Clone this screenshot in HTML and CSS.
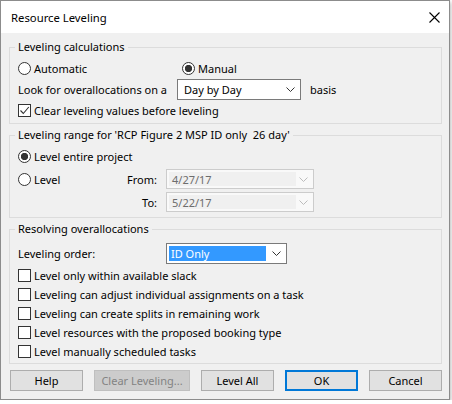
FILE: index.html
```html
<!DOCTYPE html>
<html>
<head>
<meta charset="utf-8">
<link rel="stylesheet" href="styles.css">
</head>
<body>
<div class="dialog">
  <div class="titlebar">
    <span class="title">Resource Leveling</span>
    <svg class="close" width="11" height="11" viewBox="0 0 11 11"><path d="M0.5 0.5 L10.5 10.5 M10.5 0.5 L0.5 10.5" stroke="#000" stroke-width="1.1" fill="none"/></svg>
  </div>
  <div class="content">
    <fieldset class="group g1">
      <legend>Leveling calculations</legend>
      <div class="row h17 first5">
        <label class="opt w-auto"><span class="radio"></span>Automatic</label>
        <label class="opt"><span class="radio on"></span>Manual</label>
      </div>
      <div class="row look">
        <span class="look-lbl">Look for overallocations on a</span>
        <div class="combo day"><span class="val">Day by Day</span><svg class="chev" width="9" height="5" viewBox="0 0 9 5"><path d="M0.5 0.5 L4.5 4.5 L8.5 0.5" stroke="#333" fill="none"/></svg></div>
        <span class="basis">basis</span>
      </div>
      <div class="row h17 mt2">
        <label class="opt"><span class="check"><svg width="11" height="11" viewBox="0 0 11 11"><path d="M1.5 5.5 L4.3 8.5 L9.8 2" stroke="#333" stroke-width="1.1" fill="none"/></svg></span>Clear leveling values before leveling</label>
      </div>
    </fieldset>

    <fieldset class="group g2">
      <legend>Leveling range for 'RCP Figure 2 MSP ID only&nbsp; 26 day'</legend>
      <div class="row h17 first5">
        <label class="opt"><span class="radio on"></span>Level entire project</label>
      </div>
      <div class="range">
        <label class="opt"><span class="radio"></span>Level</label>
        <span class="rlbl">From:</span>
        <div class="combo date"><span class="edit">4/27/17</span><svg class="chev" width="9" height="5" viewBox="0 0 9 5"><path d="M0.5 0.5 L4.5 4.5 L8.5 0.5" stroke="#bcbcbc" fill="none"/></svg></div>
        <span></span>
        <span class="rlbl">To:</span>
        <div class="combo date"><span class="edit">5/22/17</span><svg class="chev" width="9" height="5" viewBox="0 0 9 5"><path d="M0.5 0.5 L4.5 4.5 L8.5 0.5" stroke="#bcbcbc" fill="none"/></svg></div>
      </div>
    </fieldset>

    <fieldset class="group g3">
      <legend>Resolving overallocations</legend>
      <div class="row order">
        <span class="order-lbl">Leveling order:</span>
        <div class="combo ord"><span class="sel">ID Only</span><svg class="chev" width="9" height="5" viewBox="0 0 9 5"><path d="M0.5 0.5 L4.5 4.5 L8.5 0.5" stroke="#333" fill="none"/></svg></div>
      </div>
      <div class="checks">
        <label class="opt h19"><span class="check"></span>Level only within available slack</label>
        <label class="opt h19"><span class="check"></span>Leveling can adjust individual assignments on a task</label>
        <label class="opt h19"><span class="check"></span>Leveling can create splits in remaining work</label>
        <label class="opt h19"><span class="check"></span>Level resources with the proposed booking type</label>
        <label class="opt h19"><span class="check"></span>Level manually scheduled tasks</label>
      </div>
    </fieldset>

    <div class="buttons">
      <button class="btn">Help</button>
      <button class="btn wide disabled">Clear Leveling...</button>
      <button class="btn">Level All</button>
      <button class="btn default">OK</button>
      <button class="btn">Cancel</button>
    </div>
  </div>
</div>
</body>
</html>
```

FILE: styles.css
```css
html, body {
  margin: 0;
  padding: 0;
  background: #ffffff;
}
body {
  font-family: "Noto Sans", "Open Sans", sans-serif;
  font-size: 11px;
  color: #000;
}
.dialog {
  width: 450px;
  height: 400px;
  box-sizing: border-box;
  border: 1px solid #8c8c8c;
  background: #f0f0f0;
  display: flex;
  flex-direction: column;
  box-shadow: 1px 2px 4px rgba(0, 0, 0, 0.28);
}
.titlebar {
  height: 32px;
  flex: none;
  background: #ffffff;
  display: flex;
  align-items: center;
  justify-content: space-between;
  padding: 0 9px 0 10px;
}
.title {
  font-size: 11.3px;
  padding-top: 1px;
}
.close {
  display: block;
  margin-top: 1px;
}
.content {
  flex: 1;
  display: flex;
  flex-direction: column;
  padding: 0 7px 0 8px;
}
.group {
  margin: 3px 0 0 0;
  border: 1px solid #dcdcdc;
  padding: 0 8px;
  min-width: 0;
}
.g1 {
  margin-top: 6px;
  padding-bottom: 4px;
}
.g2 {
  padding-bottom: 5px;
}
.g3 {
  padding-bottom: 2px;
}
legend {
  padding: 0 3px;
  margin-left: -3px;
  line-height: 16px;
  height: 16px;
}
.row {
  display: flex;
  align-items: center;
}
.h17 {
  height: 17px;
}
.first5 {
  margin-top: 5px;
}
.mt2 {
  margin-top: 2px;
}
.opt {
  display: flex;
  align-items: center;
  white-space: nowrap;
}
.w-auto {
  width: 164px;
}
.radio {
  width: 13px;
  height: 13px;
  box-sizing: border-box;
  border: 1px solid #333;
  border-radius: 50%;
  background: #fff;
  margin-right: 3px;
  flex: none;
}
.radio.on {
  background: radial-gradient(circle, #333 0 3.4px, #fff 3.9px);
}
.check {
  width: 13px;
  height: 13px;
  box-sizing: border-box;
  border: 1px solid #333;
  background: #fff;
  margin-right: 3px;
  flex: none;
  display: flex;
  align-items: center;
  justify-content: center;
}
.check svg {
  display: block;
}
.look {
  margin-top: 2px;
  height: 21px;
}
.look-lbl {
  width: 159px;
}
.combo {
  box-sizing: border-box;
  display: flex;
  align-items: center;
  justify-content: space-between;
}
.chev {
  display: block;
  flex: none;
}
.day {
  width: 124px;
  height: 21px;
  border: 1px solid #7a7a7a;
  background: #fff;
  padding: 0 5px 0 6px;
}
.basis {
  margin-left: 9px;
}
.range {
  margin-top: 4px;
  display: grid;
  grid-template-columns: 100px 39px 157px;
  grid-auto-rows: 20px;
  row-gap: 3px;
  align-items: center;
}
.rlbl {
  text-align: right;
}
.date {
  margin-left: 9px;
  width: 148px;
  height: 20px;
  border: 1px solid #cccccc;
  background: #f9f9f9;
  padding: 2px 5px 2px 2px;
  color: #6d6d6d;
}
.edit {
  display: flex;
  align-items: center;
  height: 100%;
  width: 127px;
  background: #f0f0f0;
  padding-left: 3px;
  box-sizing: border-box;
}
.order {
  margin-top: 6px;
  height: 21px;
}
.order-lbl {
  width: 148px;
}
.ord {
  width: 121px;
  height: 21px;
  border: 1px solid #7a7a7a;
  background: #fff;
  padding: 2px 5px 2px 2px;
}
.sel {
  display: flex;
  align-items: center;
  height: 100%;
  width: 97px;
  background: #3399ff;
  color: #fff;
  padding-left: 2px;
  box-sizing: border-box;
}
.checks {
  margin-top: 2px;
  display: flex;
  flex-direction: column;
}
.h19 {
  height: 19px;
}
.buttons {
  display: flex;
  gap: 11px;
  margin-top: 6px;
  padding-left: 1px;
}
.btn {
  width: 73px;
  height: 21px;
  box-sizing: border-box;
  border: 1px solid #adadad;
  background: #e1e1e1;
  font-family: inherit;
  font-size: 11px;
  color: #000;
  padding: 0;
  margin: 0;
}
.btn.wide {
  width: 96px;
}
.btn.disabled {
  background: #cccccc;
  border-color: #bfbfbf;
  color: #838383;
}
.btn.default {
  border: 2px solid #0078d7;
}
```
